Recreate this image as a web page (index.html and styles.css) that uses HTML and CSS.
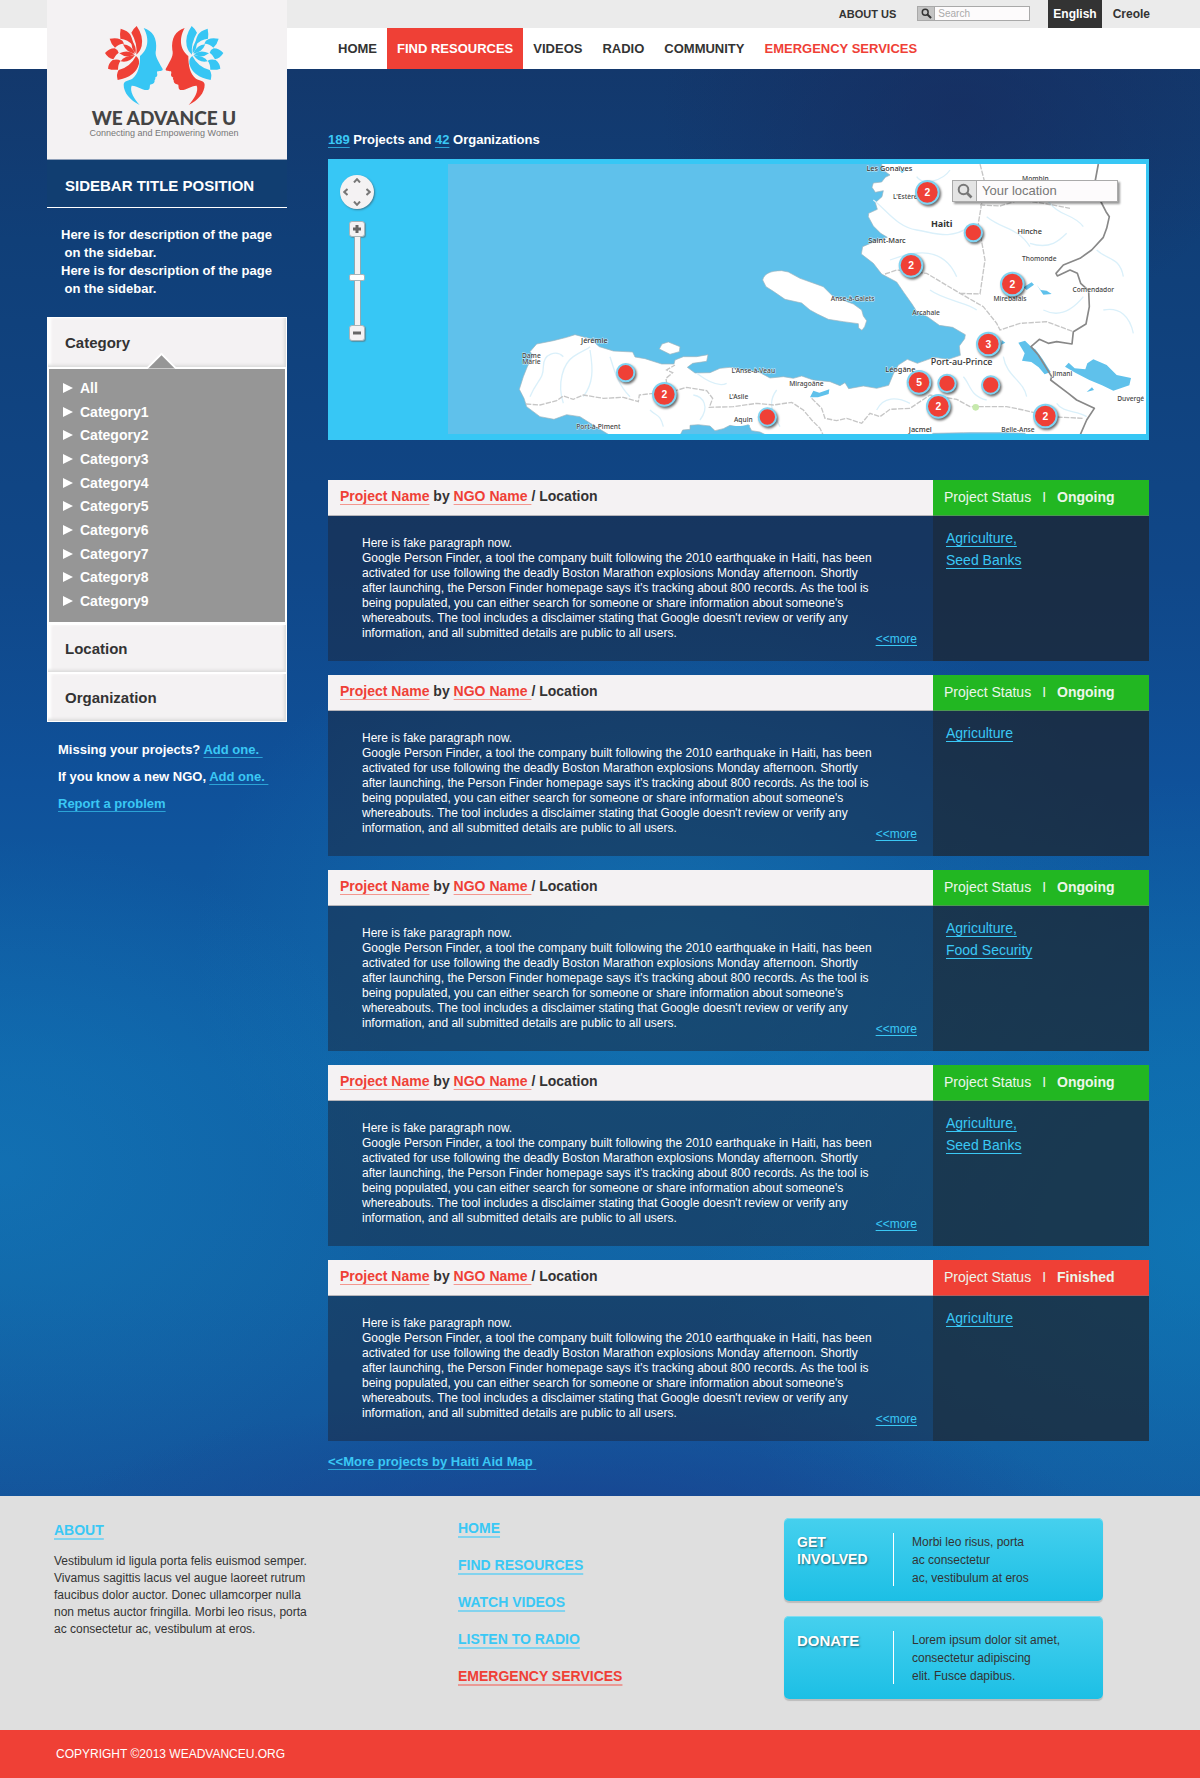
FILE: index.html
```html
<!DOCTYPE html>
<html lang="en">
<head>
<meta charset="utf-8">
<meta name="viewport" content="width=device-width, initial-scale=1">
<title>We Advance U - Find Resources</title>
<link rel="stylesheet" href="styles.css">
</head>
<body>
<header class="site-header">
  <div class="topbar">
    <a class="about-link" href="#">ABOUT US</a>
    <form class="site-search">
      <label class="site-search-icon" for="site-q"><svg viewBox="0 0 12 12" width="11" height="11" aria-hidden="true"><circle cx="4.6" cy="4.6" r="3.2" fill="none" stroke="#333" stroke-width="1.6"/><path d="M7 7L11 11" stroke="#333" stroke-width="2.2"/></svg></label>
      <input class="site-search-input" id="site-q" type="text" placeholder="Search">
    </form>
    <div class="langs">
      <a class="lang lang-on" href="#">English</a>
      <a class="lang" href="#">Creole</a>
    </div>
  </div>
  <nav class="nav">
    <a href="#">HOME</a>
    <a class="nav-on" href="#">FIND RESOURCES</a>
    <a href="#">VIDEOS</a>
    <a href="#">RADIO</a>
    <a href="#">COMMUNITY</a>
    <a class="nav-alert" href="#">EMERGENCY SERVICES</a>
  </nav>
  <a class="logo" href="#">
    <svg viewBox="190 75 360 243" width="120" height="81" aria-hidden="true">
      <defs>
        <path id="face" d="M309 84C336 92 350 115 346 150C342 165 348 176 366 207C367 213 360 213 350 214C347 220 352 222 349 229L343 233C347 237 340 240 342 244C341 251 334 253 328 254C327 262 328 268 322 270C306 273 290 256 273 257C266 273 281 297 297 315C268 300 249 278 249 254C250 240 264 243 275 236C293 222 298 198 298 168C318 152 330 122 309 84Z"/>
        <g id="lotus">
          <path d="M288 78Q309 108 303 138Q298 156 287 164Q291 130 272 98Q278 86 288 78Z"/>
          <path d="M240 86Q262 92 269 104Q279 124 276 136Q262 118 239 116Q237 100 240 86Z"/>
          <path d="M207 116Q228 112 238 118Q247 121 250 131Q236 130 223 143Q211 132 207 116Z"/>
          <path d="M193 159Q205 145 222 145Q232 149 234 158Q224 164 218 178Q202 175 193 159Z"/>
          <path d="M202 206Q203 190 216 180Q230 176 240 182Q232 192 232 209Q215 211 202 206Z"/>
          <path d="M231 240Q226 222 234 210Q268 202 286 168Q297 176 295 191Q285 230 231 240Z"/>
          <path d="M273 120Q288 140 285 160Q270 146 273 120Z"/>
          <path d="M247 133Q272 134 283 161Q257 158 247 133Z"/>
          <path d="M236 160Q262 148 281 163Q258 177 236 160Z"/>
          <path d="M240 184Q250 167 283 165Q266 190 240 184Z"/>
        </g>
      </defs>
      <use href="#face" fill="#37c6f4"/>
      <use href="#lotus" fill="#ef4036"/>
      <g transform="translate(741 0) scale(-1 1)">
        <use href="#face" fill="#ef4036"/>
        <use href="#lotus" fill="#37c6f4"/>
      </g>
    </svg>
    <span class="logo-name">WE ADVANCE U</span>
    <span class="logo-tag">Connecting and Empowering Women</span>
  </a>
</header>

<div class="content">
  <aside class="sidebar">
    <h1 class="side-title">SIDEBAR TITLE POSITION</h1>
    <p class="side-desc">Here is for description of the page<br>&nbsp;on the sidebar.<br>Here is for description of the page<br>&nbsp;on the sidebar.</p>
    <div class="accordion">
      <button class="acc-head acc-open" type="button">Category</button>
      <ul class="cats">
        <li><a href="#">All</a></li>
        <li><a href="#">Category1</a></li>
        <li><a href="#">Category2</a></li>
        <li><a href="#">Category3</a></li>
        <li><a href="#">Category4</a></li>
        <li><a href="#">Category5</a></li>
        <li><a href="#">Category6</a></li>
        <li><a href="#">Category7</a></li>
        <li><a href="#">Category8</a></li>
        <li><a href="#">Category9</a></li>
      </ul>
      <button class="acc-head" type="button">Location</button>
      <button class="acc-head" type="button">Organization</button>
    </div>
    <div class="side-links">
      <p>Missing your projects? <a class="ul" href="#">Add one.&nbsp;</a></p>
      <p>If you know a new NGO, <a class="ul" href="#">Add one.&nbsp;</a></p>
      <p><a class="ul" href="#">Report a problem</a></p>
    </div>
  </aside>

  <main class="main">
    <p class="counts"><a class="ul" href="#">189</a> Projects and <a class="ul" href="#">42</a> Organizations</p>

    <section class="map" aria-label="Project map">
      <div class="map-tools">
        <div class="pan">
          <button class="pan-n" type="button" aria-label="Pan north"><svg viewBox="0 0 8 5" width="8" height="5"><path d="M1 4.5L4 1.2L7 4.5"/></svg></button>
          <button class="pan-w" type="button" aria-label="Pan west"><svg viewBox="0 0 5 8" width="5" height="8"><path d="M4.5 1L1.2 4L4.5 7"/></svg></button>
          <button class="pan-e" type="button" aria-label="Pan east"><svg viewBox="0 0 5 8" width="5" height="8"><path d="M.5 1L3.8 4L.5 7"/></svg></button>
          <button class="pan-s" type="button" aria-label="Pan south"><svg viewBox="0 0 8 5" width="8" height="5"><path d="M1 .5L4 3.8L7 .5"/></svg></button>
        </div>
        <button class="zoom" type="button" aria-label="Zoom in"><svg viewBox="0 0 8 8" width="8" height="8"><path d="M4 0V8M0 4H8"/></svg></button>
        <input class="zoom-range" type="range" min="0" max="100" value="54" aria-label="Zoom level">
        <button class="zoom" type="button" aria-label="Zoom out"><svg viewBox="0 0 8 8" width="8" height="8"><path d="M0 4H8"/></svg></button>
      </div>
      <svg class="map-canvas" viewBox="-846 42 2094 810" preserveAspectRatio="xMidYMid slice">
        <rect class="sea" x="-1800" y="42" width="4000" height="810"/>
        <path class="land" d="M450 30L462 62L480 75L466 82L455 96L430 99L426 112L436 127L460 122L456 140L436 158L442 178L416 190L415 200L430 228L452 250L472 262L440 272L398 290L394 312L430 340L455 372L500 396L522 428L546 462L560 484L592 500L628 526L668 532L706 554L704 566L688 588L691 616L655 628L612 622L562 640L532 628L505 645L490 672L476 706L440 715L400 708L356 716L345 698L330 707L300 695L250 690L215 678L190 685L160 680L120 684L90 668L40 660L0 652L-30 655L-60 668L-105 669L-128 652L-112 640L-70 634L-66 614L-100 620L-140 620L-165 630L-168 642L-205 642L-255 626L-285 621L-292 606L-350 603L-392 590L-420 566L-465 554L-490 562L-530 572L-580 582L-600 605L-590 616L-608 650L-620 680L-632 718L-618 745L-610 770L-570 800L-528 808L-490 794L-450 800L-400 832L-360 856L-150 856L-142 840L-120 838L-120 826L-95 824L-60 828L-45 842L-20 836L0 826L30 832L55 824L65 842L90 846L110 856L600 856L610 850L700 848L830 848L885 850L890 856L2200 856L2200 30Z"/>
        <path class="land" d="M98 390C102 372 120 362 155 362L175 366L210 385L280 410L310 440L370 462L395 480L400 498L410 512L404 530L396 541L386 534L385 521L340 515L295 508L262 492L240 480L215 459L165 448L130 424L108 410Z"/>
        <path class="land" d="M-212 597L-204 582L-185 576L-150 590L-152 605L-180 613Z"/>
        <g class="rivers">
          <path d="M-600 740C-580 690-560 690-560 650S-520 600-500 620M-500 760C-520 700-500 640-470 620S-430 600-420 590M-440 740C-410 700-410 660-420 600M-300 740C-340 700-350 650-360 620M-240 780C-220 800-210 790-200 830M-90 810C-60 770-80 740-110 735M-100 670C-60 700-30 710-10 700"/>
          <path d="M430 150C470 180 500 230 560 240S660 270 720 230M560 80C580 110 640 90 660 60M480 330C560 300 640 290 680 380M600 420C640 450 720 460 740 480M850 100C880 140 930 120 960 160S1030 190 1060 230M770 200C820 240 860 230 900 290M900 280C960 300 990 270 1010 250M940 480C980 500 1020 490 1060 440M1100 300C1130 330 1170 320 1180 380M1120 480C1170 470 1200 500 1210 550M820 620C830 680 880 690 890 740M700 680C720 700 720 740 770 750M440 780C460 740 500 740 540 760M150 830C130 790 110 760 140 720M980 760C1000 790 1040 780 1070 800"/>
        </g>
        <g class="regions">
          <path d="M-612 762L-570 765L-520 752L-500 738L-470 748L-440 735L-380 745L-320 742L-275 755L-272 735L-230 730L-190 700L-192 685L-172 668L-190 660L-165 645M-190 730L-130 712L-70 722L-52 745L-62 772L10 770L80 760L130 765L185 757L220 780L245 810L270 835L280 856M245 745L275 775L285 805L320 812L350 805L395 820L420 790L450 800L480 778L540 775L600 735L680 748L720 770L830 770L880 780L960 800L1060 805"/>
          <path d="M465 372L500 360L590 370L640 400L690 430L760 470L800 520L810 540L870 520L950 515L1030 545M690 430L750 432L765 330L745 220L755 160L765 100L750 42M750 165L810 168L870 150L940 160L1020 175"/>
        </g>
        <g class="lakes">
          <path d="M865 578L885 572L905 592L916 598L938 628L962 666L944 673L926 652L904 636L876 632L884 610Z"/>
          <path d="M1005 650L1016 638L1034 655L1066 658L1072 640L1090 628L1130 645L1160 675L1203 684L1198 706L1150 722L1116 706L1078 690L1036 668Z"/>
          <path d="M240 742L250 722L268 728L298 718L296 732L264 742Z"/>
          <path d="M880 412L905 397L912 404L890 420ZM920 404L932 420L950 422L965 432L940 434ZM510 62L526 60L516 70ZM1070 726L1086 712L1092 720ZM815 570L826 578L814 584Z"/>
          <path d="M0 828L30 828L60 826L52 840L20 848L0 850ZM640 852L720 848L830 848L885 852Z"/>
        </g>
        <circle cx="737" cy="772" r="10" fill="#c6e9ac"/>
        <path class="border" d="M1105 42L1095 96L1110 150L1128 185L1138 200L1130 235L1120 262L1085 300L1050 325L1000 345L978 370L982 378L1020 360L1042 370L1052 400L1076 422L1078 470L1068 522L1030 545L1026 582L980 575L955 580L928 568L903 590L925 615L965 680L962 690L1015 730L1040 750L1093 775L1070 810L1050 856"/>
        <g class="places">
          <text x="478" y="62">Les Gonaïves</text>
          <text class="sm" x="526" y="147">L'Estère</text>
          <text class="sm" x="916" y="92">Mombin</text>
          <text class="lg" x="635" y="231">Haiti</text>
          <text x="899" y="251">Hinche</text>
          <text x="471" y="279">Saint-Marc</text>
          <text class="sm" x="928" y="333">Thomonde</text>
          <text class="sm" x="1090" y="427">Comendador</text>
          <text class="sm" x="840" y="454">Mirebalais</text>
          <text class="sm" x="368" y="453">Anse-à-Galets</text>
          <text class="sm" x="588" y="496">Arcahaie</text>
          <text class="md" x="695" y="644">Port-au-Prince</text>
          <text x="511" y="667">Léogâne</text>
          <text class="sm" x="997" y="679">Jimani</text>
          <text class="sm" x="70" y="670">L'Anse-à-Veau</text>
          <text class="sm" x="229" y="709">Miragoâne</text>
          <text class="sm" x="26" y="748">L'Asile</text>
          <text class="sm" x="1202" y="752">Duvergé</text>
          <text class="sm" x="40" y="815">Aquin</text>
          <text x="571" y="845">Jacmel</text>
          <text class="sm" x="864" y="845">Belle-Anse</text>
          <text x="-407" y="579">Jérémie</text>
          <text class="sm" x="-596" y="623">Dame</text>
          <text class="sm" x="-596" y="643">Marie</text>
          <text class="sm" x="-395" y="836">Port-à-Piment</text>
        </g>
        <g class="pins">
          <circle cx="592" cy="127" r="34"/><text x="592" y="138">2</text>
          <circle cx="730" cy="248" r="26"/>
          <circle cx="543" cy="346" r="34"/><text x="543" y="357">2</text>
          <circle cx="847" cy="402" r="34"/><text x="847" y="413">2</text>
          <circle cx="775" cy="582" r="34"/><text x="775" y="593">3</text>
          <circle cx="567" cy="697" r="34"/><text x="567" y="708">5</text>
          <circle cx="651" cy="700" r="26"/>
          <circle cx="782" cy="705" r="26"/>
          <circle cx="625" cy="769" r="34"/><text x="625" y="780">2</text>
          <circle cx="946" cy="798" r="34"/><text x="946" y="809">2</text>
          <circle cx="112" cy="801" r="26"/>
          <circle cx="-313" cy="668" r="26"/>
          <circle cx="-197" cy="733" r="34"/><text x="-197" y="744">2</text>
        </g>
      </svg>
      <form class="map-search">
        <label class="map-search-icon" for="loc-q"><svg viewBox="0 0 16 16" width="16" height="16" aria-hidden="true"><circle cx="6.5" cy="6.5" r="4.8" fill="none" stroke="#777" stroke-width="2"/><path d="M10 10L14.5 14.5" stroke="#777" stroke-width="2.6"/></svg></label>
        <input class="map-search-input" id="loc-q" type="text" placeholder="Your location">
      </form>
    </section>

    <section class="projects" aria-label="Projects">
      <article class="project">
        <h2 class="p-title"><a href="#">Project Name</a> by <a href="#">NGO Name&nbsp;</a>/ Location</h2>
        <p class="p-status">Project Status<span>I</span><b>Ongoing</b></p>
        <div class="p-body">
          <p class="p-text">Here is fake paragraph now.<br>Google Person Finder, a tool the company built following the 2010 earthquake in Haiti, has been<br>activated for use following the deadly Boston Marathon explosions Monday afternoon. Shortly<br>after launching, the Person Finder homepage says it's tracking about 800 records. As the tool is<br>being populated, you can either search for someone or share information about someone's<br>whereabouts. The tool includes a disclaimer stating that Google doesn't review or verify any<br>information, and all submitted details are public to all users.</p>
          <a class="p-more" href="#">&lt;&lt;more</a>
        </div>
        <ul class="p-tags"><li><a href="#">Agriculture,</a></li><li><a href="#">Seed Banks</a></li></ul>
      </article>
      <article class="project">
        <h2 class="p-title"><a href="#">Project Name</a> by <a href="#">NGO Name&nbsp;</a>/ Location</h2>
        <p class="p-status">Project Status<span>I</span><b>Ongoing</b></p>
        <div class="p-body">
          <p class="p-text">Here is fake paragraph now.<br>Google Person Finder, a tool the company built following the 2010 earthquake in Haiti, has been<br>activated for use following the deadly Boston Marathon explosions Monday afternoon. Shortly<br>after launching, the Person Finder homepage says it's tracking about 800 records. As the tool is<br>being populated, you can either search for someone or share information about someone's<br>whereabouts. The tool includes a disclaimer stating that Google doesn't review or verify any<br>information, and all submitted details are public to all users.</p>
          <a class="p-more" href="#">&lt;&lt;more</a>
        </div>
        <ul class="p-tags"><li><a href="#">Agriculture</a></li></ul>
      </article>
      <article class="project">
        <h2 class="p-title"><a href="#">Project Name</a> by <a href="#">NGO Name&nbsp;</a>/ Location</h2>
        <p class="p-status">Project Status<span>I</span><b>Ongoing</b></p>
        <div class="p-body">
          <p class="p-text">Here is fake paragraph now.<br>Google Person Finder, a tool the company built following the 2010 earthquake in Haiti, has been<br>activated for use following the deadly Boston Marathon explosions Monday afternoon. Shortly<br>after launching, the Person Finder homepage says it's tracking about 800 records. As the tool is<br>being populated, you can either search for someone or share information about someone's<br>whereabouts. The tool includes a disclaimer stating that Google doesn't review or verify any<br>information, and all submitted details are public to all users.</p>
          <a class="p-more" href="#">&lt;&lt;more</a>
        </div>
        <ul class="p-tags"><li><a href="#">Agriculture,</a></li><li><a href="#">Food Security</a></li></ul>
      </article>
      <article class="project">
        <h2 class="p-title"><a href="#">Project Name</a> by <a href="#">NGO Name&nbsp;</a>/ Location</h2>
        <p class="p-status">Project Status<span>I</span><b>Ongoing</b></p>
        <div class="p-body">
          <p class="p-text">Here is fake paragraph now.<br>Google Person Finder, a tool the company built following the 2010 earthquake in Haiti, has been<br>activated for use following the deadly Boston Marathon explosions Monday afternoon. Shortly<br>after launching, the Person Finder homepage says it's tracking about 800 records. As the tool is<br>being populated, you can either search for someone or share information about someone's<br>whereabouts. The tool includes a disclaimer stating that Google doesn't review or verify any<br>information, and all submitted details are public to all users.</p>
          <a class="p-more" href="#">&lt;&lt;more</a>
        </div>
        <ul class="p-tags"><li><a href="#">Agriculture,</a></li><li><a href="#">Seed Banks</a></li></ul>
      </article>
      <article class="project">
        <h2 class="p-title"><a href="#">Project Name</a> by <a href="#">NGO Name&nbsp;</a>/ Location</h2>
        <p class="p-status p-finished">Project Status<span>I</span><b>Finished</b></p>
        <div class="p-body">
          <p class="p-text">Here is fake paragraph now.<br>Google Person Finder, a tool the company built following the 2010 earthquake in Haiti, has been<br>activated for use following the deadly Boston Marathon explosions Monday afternoon. Shortly<br>after launching, the Person Finder homepage says it's tracking about 800 records. As the tool is<br>being populated, you can either search for someone or share information about someone's<br>whereabouts. The tool includes a disclaimer stating that Google doesn't review or verify any<br>information, and all submitted details are public to all users.</p>
          <a class="p-more" href="#">&lt;&lt;more</a>
        </div>
        <ul class="p-tags"><li><a href="#">Agriculture</a></li></ul>
      </article>
    </section>
    <p class="all-link"><a class="ul" href="#">&lt;&lt;More projects by Haiti Aid Map&nbsp;</a></p>
  </main>
</div>

<footer>
  <div class="footer">
    <section class="f-about">
      <h2><a class="f-link" href="#">ABOUT</a></h2>
      <p>Vestibulum id ligula porta felis euismod semper.<br>Vivamus sagittis lacus vel augue laoreet rutrum<br>faucibus dolor auctor. Donec ullamcorper nulla<br>non metus auctor fringilla. Morbi leo risus, porta<br>ac consectetur ac, vestibulum at eros.</p>
    </section>
    <ul class="f-links">
      <li><a class="f-link" href="#">HOME</a></li>
      <li><a class="f-link" href="#">FIND RESOURCES</a></li>
      <li><a class="f-link" href="#">WATCH VIDEOS</a></li>
      <li><a class="f-link" href="#">LISTEN TO RADIO</a></li>
      <li><a class="f-link f-alert" href="#">EMERGENCY SERVICES</a></li>
    </ul>
    <div class="promos">
      <a class="promo" href="#"><strong>GET<br>INVOLVED</strong><span>Morbi leo risus, porta<br>ac consectetur<br>ac, vestibulum at eros</span></a>
      <a class="promo" href="#"><strong class="promo-big">DONATE</strong><span>Lorem ipsum dolor sit amet,<br>consectetur adipiscing<br>elit. Fusce dapibus.</span></a>
    </div>
  </div>
  <p class="copyright">COPYRIGHT ©2013 WEADVANCEU.ORG</p>
</footer>
</body>
</html>
```
FILE: styles.css
```css
* { box-sizing: border-box; }

body {
  margin: 0;
  font-family: "Liberation Sans", Arial, Helvetica, sans-serif;
  font-size: 13px;
  color: #333;
  background: #dfdfdf;
}

h1, h2, p, ul { margin: 0; padding: 0; }
ul { list-style: none; }
a { color: inherit; text-decoration: none; }
button, input { font-family: inherit; }

/* header */
.site-header { position: relative; z-index: 2; font-weight: bold; }

.topbar {
  display: flex;
  justify-content: flex-end;
  height: 28px;
  padding-right: 45px;
  background: #ebebeb;
}
.about-link { margin-right: 21px; font-size: 11px; line-height: 28px; }
.site-search {
  display: flex;
  width: 113px;
  height: 15px;
  margin: 6px 18px 0 0;
  border: 1px solid #a9a9a9;
}
.site-search-icon {
  display: flex;
  align-items: center;
  justify-content: center;
  width: 17px;
  background: #c4c4c4;
  border-right: 1px solid #a9a9a9;
}
.site-search-input {
  flex: 1;
  min-width: 0;
  padding: 0 3px;
  border: 0;
  background: #fdfbfc;
  font-size: 10px;
}
.site-search-input::placeholder { color: #aaa; }
.langs { display: flex; gap: 6px; font-size: 12px; line-height: 28px; }
.lang { padding: 0 5px; height: 28px; }
.lang-on { background: #333; color: #fff; }

.nav {
  display: flex;
  height: 41px;
  padding-left: 328px;
  background: #fff;
  line-height: 41px;
}
.nav a { padding: 0 10px; }
.nav .nav-on { background: #ef4036; color: #fff; }
.nav .nav-alert { color: #ef4036; }

.logo {
  position: absolute;
  top: 0;
  left: 47px;
  display: flex;
  flex-direction: column;
  align-items: center;
  width: 240px;
  height: 160px;
  padding: 25px 6px 0 0;
  background: #f4f2f3;
  border-bottom: 1px solid #8fa0b8;
}
.logo-name {
  font-family: Lato, sans-serif;
  font-weight: 900;
  font-size: 19px;
  line-height: 24px;
  color: #444;
}
.logo-tag { font-size: 9px; line-height: 10px; font-weight: normal; color: #777; margin-top: -2px; }

/* page body */
.content {
  display: grid;
  grid-template-columns: 240px minmax(0, 1fr);
  gap: 41px;
  padding: 0 51px 24px 47px;
  background:
    radial-gradient(ellipse 520px 130px at 48% 102%, rgba(26, 62, 140, .7), rgba(26, 62, 140, 0)),
    radial-gradient(ellipse 420px 330px at 0% 77%, rgba(20, 125, 190, .5), rgba(20, 125, 190, 0)),
    radial-gradient(ellipse 500px 460px at 100% 82%, rgba(14, 130, 190, .55), rgba(14, 130, 190, 0)),
    radial-gradient(ellipse 480px 380px at 56% 62%, rgba(22, 130, 185, .5), rgba(22, 130, 185, 0)),
    radial-gradient(ellipse 300px 220px at 80% 3%, rgba(24, 42, 92, .6), rgba(24, 42, 92, 0)),
    linear-gradient(#13386c 0%, #103f78 12%, #104788 35%, #0f519a 50%, #0f62a7 70%, #1162a4 85%, #14559c 100%);
}

/* sidebar */
.sidebar { padding-top: 91px; color: #fff; font-weight: bold; }
.side-title {
  padding-left: 18px;
  border-bottom: 1px solid #fff;
  background: #113e71;
  font-size: 15px;
  line-height: 51px;
  height: 48px;
}
.side-desc { padding: 18px 0 19px 14px; line-height: 18px; white-space: nowrap; }
.accordion { border: 1px solid #fff; }
.acc-head {
  display: block;
  width: 100%;
  height: 49px;
  padding: 0 0 0 17px;
  border: 0;
  border-top: 2px solid #fff;
  background: #f4f2f3;
  box-shadow: inset -2px -2px 3px #dcdcdc, inset 3px 0 3px #fff;
  color: #333;
  font-size: 15px;
  font-weight: bold;
  text-align: left;
}
.acc-open { border-top: 0; }
.cats {
  position: relative;
  display: flex;
  flex-direction: column;
  justify-content: space-between;
  height: 256px;
  padding: 9px 0 11px 14px;
  border: 1px solid #fff;
  border-top-width: 2px;
  background: #969696;
  font-size: 14px;
  line-height: 20px;
}
/* notch that points at the open heading */
.cats::before {
  content: "";
  position: absolute;
  top: -12px;
  left: 101px;
  width: 21px;
  height: 21px;
  border: solid #fff;
  border-width: 2px 0 0 2px;
  background: linear-gradient(135deg, #969696 50%, transparent 50%);
  clip-path: polygon(0 0, 100% 0, 0 100%);
  transform: rotate(45deg);
}
.cats a { display: flex; align-items: center; gap: 7px; }
.cats a::before {
  content: "";
  border-left: 10px solid #fff;
  border-top: 5px solid transparent;
  border-bottom: 5px solid transparent;
}
.side-links { padding: 14px 0 0 11px; line-height: 27px; white-space: nowrap; }

/* underlined links */
.ul, .p-title a, .p-more, .p-tags a, .f-link {
  color: #3ac8f5;
  text-decoration: underline 1px;
  text-underline-offset: 3px;
  text-decoration-skip-ink: none;
}
.ul { text-decoration-color: #2ba3d6; }

/* main column */
.counts {
  padding-top: 61px;
  height: 90px;
  color: #fff;
  font-weight: bold;
  line-height: 20px;
}

.map {
  position: relative;
  display: flex;
  height: 281px;
  padding: 5px 3px 6px 0;
  background: #37c7f5;
}
.map-canvas { flex: 1; min-width: 0; height: 270px; display: block; }
.map-tools {
  display: flex;
  flex-direction: column;
  align-items: center;
  width: 74px;
  margin-right: 46px;
  padding: 11px 16px 0 0;
}
.pan {
  display: grid;
  grid-template: "a n b" 11px "w c e" 12px "d s f" 11px / 11px 12px 11px;
  width: 34px;
  height: 34px;
  margin-bottom: 12px;
  border-radius: 50%;
  background: #f4f2f3;
  box-shadow: 1px 1px 2px #3a7f98;
}
.pan button { display: flex; align-items: center; justify-content: center; padding: 0; border: 0; background: none; }
.pan-n { grid-area: n; }
.pan-w { grid-area: w; }
.pan-e { grid-area: e; }
.pan-s { grid-area: s; }
.pan path { fill: none; stroke: #777; stroke-width: 2; }
.zoom {
  display: flex;
  align-items: center;
  justify-content: center;
  flex: none;
  width: 16px;
  height: 16px;
  padding: 0;
  border: 1px solid #a9b4b8;
  border-radius: 3px;
  background: #f4f2f3;
  box-shadow: 1px 1px 1px #4d93ab;
}
.zoom path { stroke: #666; stroke-width: 3; }
.zoom-range {
  writing-mode: vertical-lr;
  direction: rtl;
  appearance: none;
  width: 16px;
  height: 88px;
  margin: 0;
  background: linear-gradient(#8fa9b3, #8fa9b3) 5px 0 / 7px 100% no-repeat;
}
.zoom-range::-webkit-slider-runnable-track {
  width: 16px;
  height: 88px;
  background: linear-gradient(#f4f2f3, #f4f2f3) 6px 0 / 5px 100% no-repeat;
}
.zoom-range::-webkit-slider-thumb {
  appearance: none;
  width: 16px;
  height: 7px;
  border: 1px solid #a9b4b8;
  border-radius: 2px;
  background: #fff;
}

.sea { fill: #5fc1eb; }
.land { fill: #fff; stroke: #9fb4bd; stroke-width: 2; }
.rivers path { fill: none; stroke: #daf0fa; stroke-width: 4; }
.regions path { fill: none; stroke: #c6c6c6; stroke-width: 4; stroke-dasharray: 16 4; }
.lakes path { fill: #5fc1eb; }
.border { fill: none; stroke: #888; stroke-width: 5; stroke-linejoin: round; }
.places text {
  font-family: "Noto Sans", sans-serif;
  font-size: 22px;
  font-weight: 500;
  fill: #333;
  stroke: #fff;
  stroke-width: 3;
  stroke-opacity: .7;
  paint-order: stroke;
  text-anchor: middle;
}
.places .sm { font-size: 20px; fill: #444; }
.places .md { font-size: 27px; }
.places .lg { font-size: 27px; font-weight: bold; }
.pins circle { fill: #ef4036; stroke: #7fd4f3; stroke-width: 6; filter: drop-shadow(4px 5px 3px rgba(0, 0, 0, .6)); }
.pins text { font-size: 31px; font-weight: bold; fill: #fff; text-anchor: middle; }

.map-search {
  position: absolute;
  top: 21px;
  right: 31px;
  display: flex;
  width: 166px;
  height: 22px;
  border: 1px solid #aaa;
  box-shadow: 2px 2px 2px rgba(0, 0, 0, .4);
}
.map-search-icon {
  display: flex;
  align-items: center;
  justify-content: center;
  width: 24px;
  background: #e4e4e4;
  border-right: 1px solid #aaa;
}
.map-search-input { flex: 1; min-width: 0; padding: 0 5px 1px; border: 0; background: #fdfbfc; font-size: 13px; }
.map-search-input::placeholder { color: #777; }

/* project cards */
.projects { display: grid; gap: 14px; padding-top: 40px; }
.project { display: grid; grid-template-columns: minmax(0, 1fr) 216px; }
.p-title, .p-status {
  height: 36px;
  border-bottom: 1px solid rgba(120, 120, 130, .5);
  font-size: 14px;
  line-height: 33px;
  white-space: nowrap;
}
.p-title { padding-left: 12px; background: #f4f2f3; }
.p-title a { color: #ef4036; text-decoration-color: #f3978f; }
.p-status { padding-left: 11px; background: #22b722; color: #ecf6ea; line-height: 34px; }
.p-status span { margin: 0 11px; }
.p-finished { background: #ef4036; }
.p-body {
  display: flex;
  align-items: flex-end;
  justify-content: space-between;
  min-height: 145px;
  padding: 20px 16px 14px 34px;
  background: rgba(28, 38, 57, .5);
  font-size: 12px;
  line-height: 15px;
  white-space: nowrap;
}
.p-text { align-self: flex-start; color: #fff; }
.p-more { text-underline-offset: 2px; }
.p-tags {
  padding: 11px 0 0 13px;
  background: rgba(30, 34, 42, .7);
  font-size: 14px;
  line-height: 22px;
}
.all-link { padding-top: 11px; line-height: 20px; font-weight: bold; }

/* footer */
.footer {
  display: grid;
  grid-template-columns: 404px 326px minmax(0, 319px);
  padding: 22px 51px 27px 54px;
  color: #333;
}
.f-link { font-size: 14px; font-weight: bold; text-decoration: underline 2px #83d3ee; }
.f-alert { color: #ef4036; text-decoration-color: #ea9a95; }
.f-about h2 { font-size: 14px; line-height: 24px; }
.f-about p { margin-top: 11px; font-size: 12px; line-height: 17px; }
.f-links li { height: 37px; line-height: 20px; }
.promos { display: grid; gap: 15px; align-content: start; }
.promo {
  display: flex;
  height: 83px;
  padding: 15px 13px;
  border-radius: 5px;
  background: linear-gradient(#46d0ee, #1cbfe5);
  box-shadow: inset 0 1px #7fdcf0, 0 2px 1px #bcbcbc;
}
.promo strong {
  width: 96px;
  padding-top: 1px;
  color: #fff;
  font-size: 14px;
  line-height: 17px;
  text-shadow: 1px 1px 2px #23697a;
}
.promo .promo-big { font-size: 15px; }
.promo span { padding-left: 18px; border-left: 1px solid #fff; font-size: 12px; line-height: 18px; }
.copyright {
  height: 48px;
  padding-left: 56px;
  background: #ef4036;
  color: #fff;
  font-size: 12px;
  line-height: 49px;
}
```
